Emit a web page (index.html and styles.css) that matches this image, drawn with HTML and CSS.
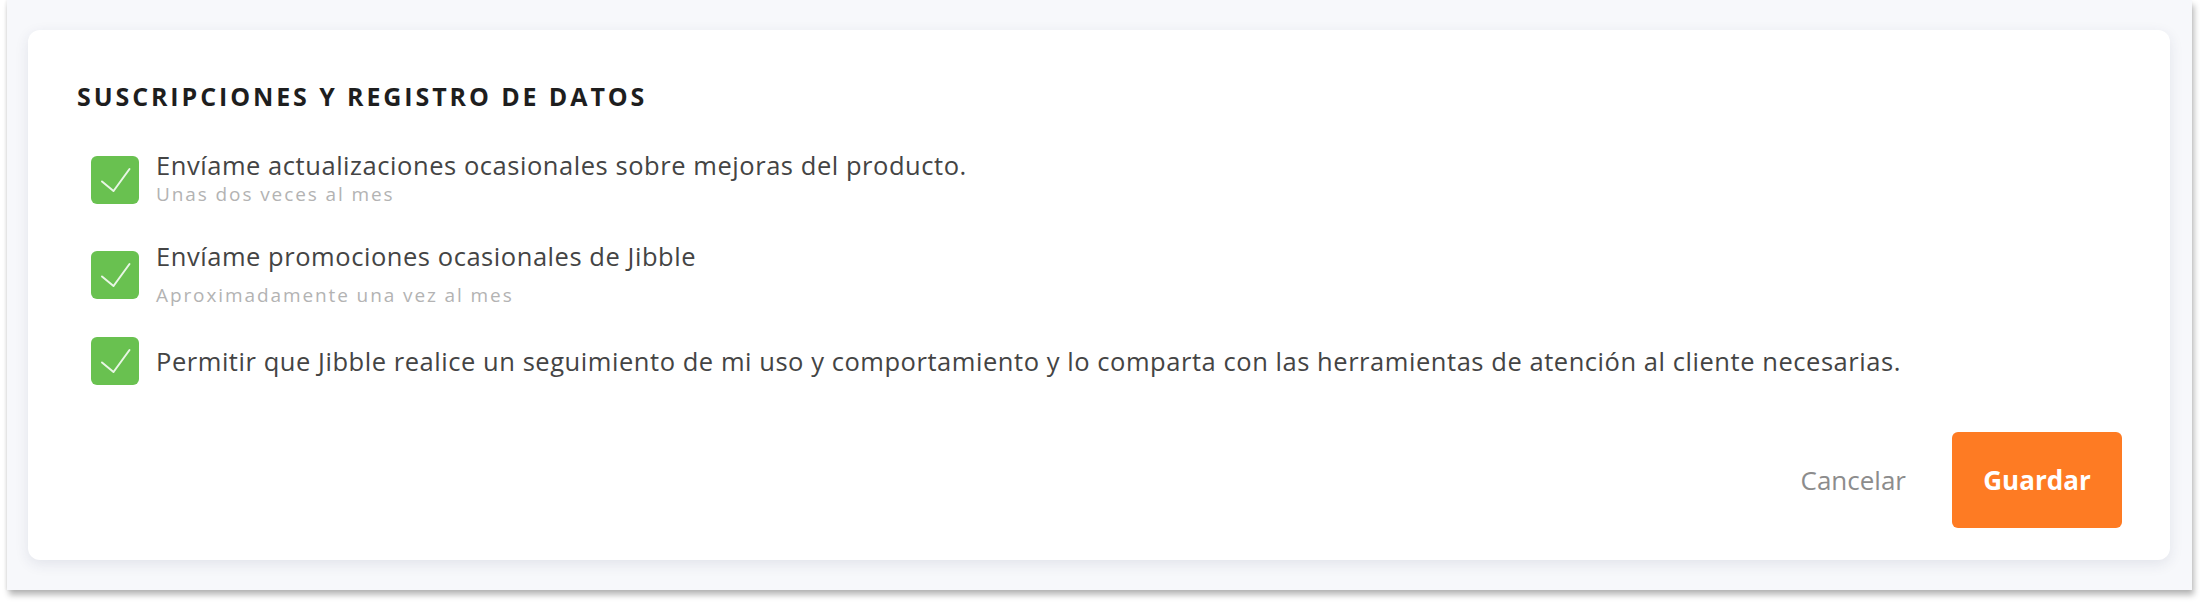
FILE: index.html
```html
<!DOCTYPE html>
<html lang="es">
<head>
<meta charset="utf-8">
<title>Suscripciones y registro de datos</title>
<link rel="stylesheet" href="styles.css">
</head>
<body>
<div class="frame">
  <section class="card">
    <h2 class="card-title">SUSCRIPCIONES Y REGISTRO DE DATOS</h2>
    <div class="options">
      <label class="option option-first">
        <span class="check"><svg viewBox="0 0 48 48" width="48" height="48"><path d="M11 25.5 L22.5 35 L38.5 13" fill="none" stroke="#ffffff" stroke-opacity="0.85" stroke-width="2" stroke-linecap="round" stroke-linejoin="round"/></svg></span>
        <span class="option-text option-text-first">
          <span class="option-label">Envíame actualizaciones ocasionales sobre mejoras del producto.</span>
          <span class="option-sub option-sub-first">Unas dos veces al mes</span>
        </span>
      </label>
      <label class="option option-second">
        <span class="check"><svg viewBox="0 0 48 48" width="48" height="48"><path d="M11 25.5 L22.5 35 L38.5 13" fill="none" stroke="#ffffff" stroke-opacity="0.85" stroke-width="2" stroke-linecap="round" stroke-linejoin="round"/></svg></span>
        <span class="option-text option-text-second">
          <span class="option-label">Envíame promociones ocasionales de Jibble</span>
          <span class="option-sub option-sub-second">Aproximadamente una vez al mes</span>
        </span>
      </label>
      <label class="option">
        <span class="check"><svg viewBox="0 0 48 48" width="48" height="48"><path d="M11 25.5 L22.5 35 L38.5 13" fill="none" stroke="#ffffff" stroke-opacity="0.85" stroke-width="2" stroke-linecap="round" stroke-linejoin="round"/></svg></span>
        <span class="option-text">
          <span class="option-label">Permitir que Jibble realice un seguimiento de mi uso y comportamiento y lo comparta con las herramientas de atención al cliente necesarias.</span>
        </span>
      </label>
    </div>
    <div class="actions">
      <button class="btn btn-cancel" type="button">Cancelar</button>
      <button class="btn btn-save" type="button">Guardar</button>
    </div>
  </section>
</div>
</body>
</html>
```

FILE: styles.css
```css
html, body {
  margin: 0;
  padding: 0;
  background: #ffffff;
}

body {
  font-family: "Open Sans", "Noto Sans", "Liberation Sans", sans-serif;
  width: 2200px;
  height: 606px;
  overflow: hidden;
}

.frame {
  margin-left: 7px;
  width: 2185px;
  height: 590px;
  box-sizing: border-box;
  background: #f7f8fb;
  box-shadow: 2px 5px 6px rgba(0, 0, 0, 0.28), -1px 0 3px rgba(0, 0, 0, 0.07);
  padding: 30px 22px 0 21px;
}

.card {
  background: #ffffff;
  border-radius: 12px;
  box-shadow: 0 4px 14px rgba(40, 50, 90, 0.10);
  padding: 51px 48px 32px 49px;
  height: 530px;
  box-sizing: border-box;
  display: flex;
  flex-direction: column;
}

.card-title {
  margin: 0;
  font-size: 25px;
  line-height: 30px;
  font-weight: 700;
  color: #1e1e1e;
  letter-spacing: 2.9px;
}

.options {
  display: flex;
  flex-direction: column;
  margin-top: 39px;
  padding-left: 14px;
}

.option {
  display: flex;
  align-items: center;
  gap: 17px;
}

.option-first {
  margin-bottom: 31px;
}

.option-second {
  margin-bottom: 28px;
}

.check {
  flex: 0 0 48px;
  width: 48px;
  height: 48px;
  border-radius: 6px;
  background: #69c150;
  display: flex;
}

.option-text {
  display: flex;
  flex-direction: column;
}

.option-text-first {
  padding-bottom: 4px;
}

.option-text-second {
  padding-bottom: 2px;
}

.option-label {
  font-size: 25.5px;
  line-height: 30px;
  color: #444444;
  letter-spacing: 0.55px;
}

.option-sub {
  font-size: 19px;
  line-height: 24px;
  color: #b3b3b3;
  letter-spacing: 1.9px;
}

.option-sub-first {
  margin-top: 2px;
}

.option-sub-second {
  margin-top: 12px;
}

.actions {
  margin-top: auto;
  display: flex;
  justify-content: flex-end;
  align-items: center;
  gap: 23px;
}

.btn {
  font-family: inherit;
  border: none;
  cursor: pointer;
  height: 96px;
  border-radius: 6px;
  font-size: 26px;
}

.btn-cancel {
  background: transparent;
  color: #8c8c8c;
  padding: 0 23px;
}

.btn-save {
  width: 170px;
  background: #fe7b23;
  color: #ffffff;
  font-weight: 700;
}
```
